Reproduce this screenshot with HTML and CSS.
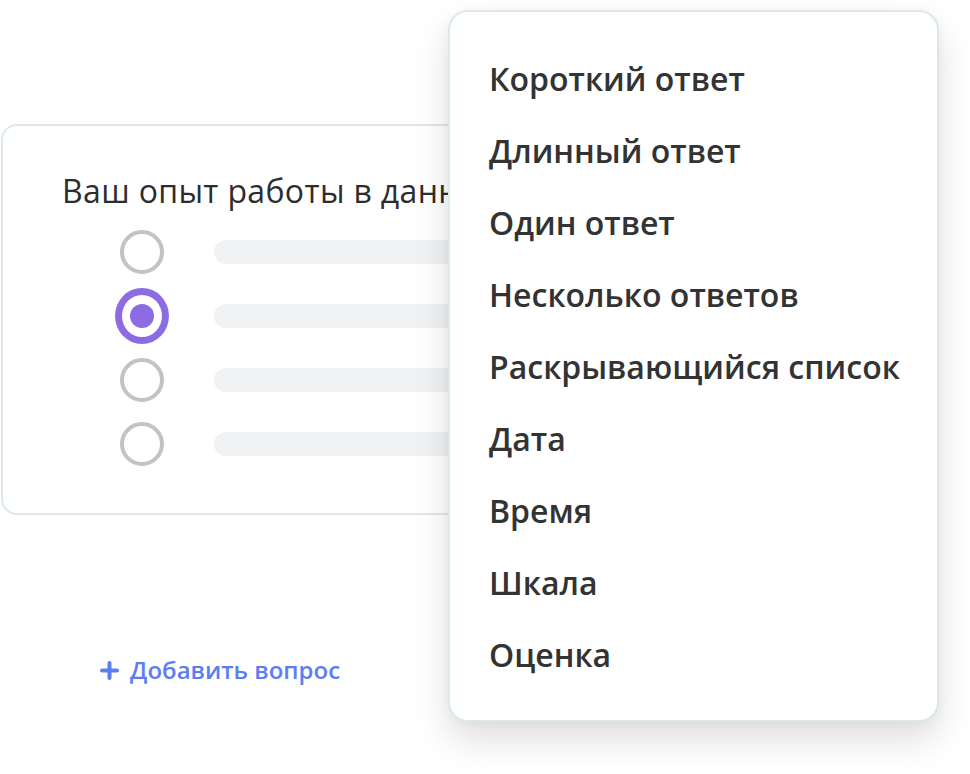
FILE: index.html
```html
<!DOCTYPE html>
<html lang="ru">
<head>
<meta charset="utf-8">
<title>Вопрос</title>
<link rel="stylesheet" href="styles.css">
</head>
<body>
<div class="stage">
  <section class="card">
    <h2 class="q-title">Ваш опыт работы в данной сфере</h2>
    <ul class="options">
      <li class="opt"><span class="radio"></span><span class="bar"></span></li>
      <li class="opt"><span class="radio radio-on"><span class="dot"></span></span><span class="bar"></span></li>
      <li class="opt"><span class="radio"></span><span class="bar"></span></li>
      <li class="opt"><span class="radio"></span><span class="bar"></span></li>
    </ul>
  </section>
  <a class="add" href="#">
    <svg class="plus" width="19" height="19" viewBox="0 0 19 19"><path d="M9.5 2v15M2 9.5h15" stroke="currentColor" stroke-width="4" stroke-linecap="round"/></svg>
    <span>Добавить вопрос</span>
  </a>
  <ul class="menu">
    <li>Короткий ответ</li>
    <li>Длинный ответ</li>
    <li>Один ответ</li>
    <li>Несколько ответов</li>
    <li>Раскрывающийся список</li>
    <li>Дата</li>
    <li>Время</li>
    <li>Шкала</li>
    <li>Оценка</li>
  </ul>
</div>
</body>
</html>
```

FILE: styles.css
```css
* { box-sizing: border-box; }
html, body { margin: 0; padding: 0; background: #fff; }
body {
  font-family: "Open Sans", "Noto Sans", sans-serif;
  color: #333333;
  width: 970px;
  height: 774px;
  overflow: hidden;
}
.stage {
  position: relative;
  width: 970px;
  height: 774px;
  padding-top: 124px;
  padding-left: 1px;
}
.card {
  width: 560px;
  height: 391px;
  border: 2px solid #dde9e9;
  border-radius: 16px;
  padding: 43px 0 0 59px;
}
.q-title {
  margin: 0;
  font-size: 32px;
  font-weight: 500;
  line-height: 44px;
  white-space: nowrap;
  letter-spacing: 0.35px;
  color: #2d2d2d;
}
.options {
  list-style: none;
  margin: 7px 0 0 53px;
  padding: 0;
}
.opt {
  display: flex;
  align-items: center;
  height: 64px;
  gap: 45px;
}
.radio {
  width: 56px;
  height: 56px;
  display: flex;
  align-items: center;
  justify-content: center;
}
.radio::before {
  content: "";
  width: 36px;
  height: 36px;
  border: 4px solid #c1c3c7;
  border-radius: 50%;
}
.radio-on::before { display: none; }
.radio-on {
  border: 7px solid #8c6be3;
  border-radius: 50%;
}
.dot {
  width: 24px;
  height: 24px;
  border-radius: 50%;
  background: #8c6be3;
}
.bar {
  width: 360px;
  height: 24px;
  border-radius: 12px;
  background: #f1f2f4;
}
.add {
  display: inline-flex;
  align-items: center;
  gap: 11px;
  margin: 139px 0 0 99px;
  color: #5b7ef2;
  text-decoration: none;
  font-size: 24px;
  font-weight: 600;
  line-height: 32px;
}
.plus { display: block; }
.menu {
  position: absolute;
  left: 448px;
  top: 10px;
  width: 491px;
  height: 712px;
  margin: 0;
  padding: 31px 0 30px 39px;
  list-style: none;
  background: #fff;
  border: 2px solid #dde9e9;
  border-radius: 20px;
  box-shadow: 0 18px 36px rgba(0, 0, 0, 0.13), 0 2px 10px rgba(0, 0, 0, 0.04);
}
.menu li {
  font-size: 32px;
  font-weight: 600;
  line-height: 72px;
  height: 72px;
  white-space: nowrap;
  color: #333333;
}
```
